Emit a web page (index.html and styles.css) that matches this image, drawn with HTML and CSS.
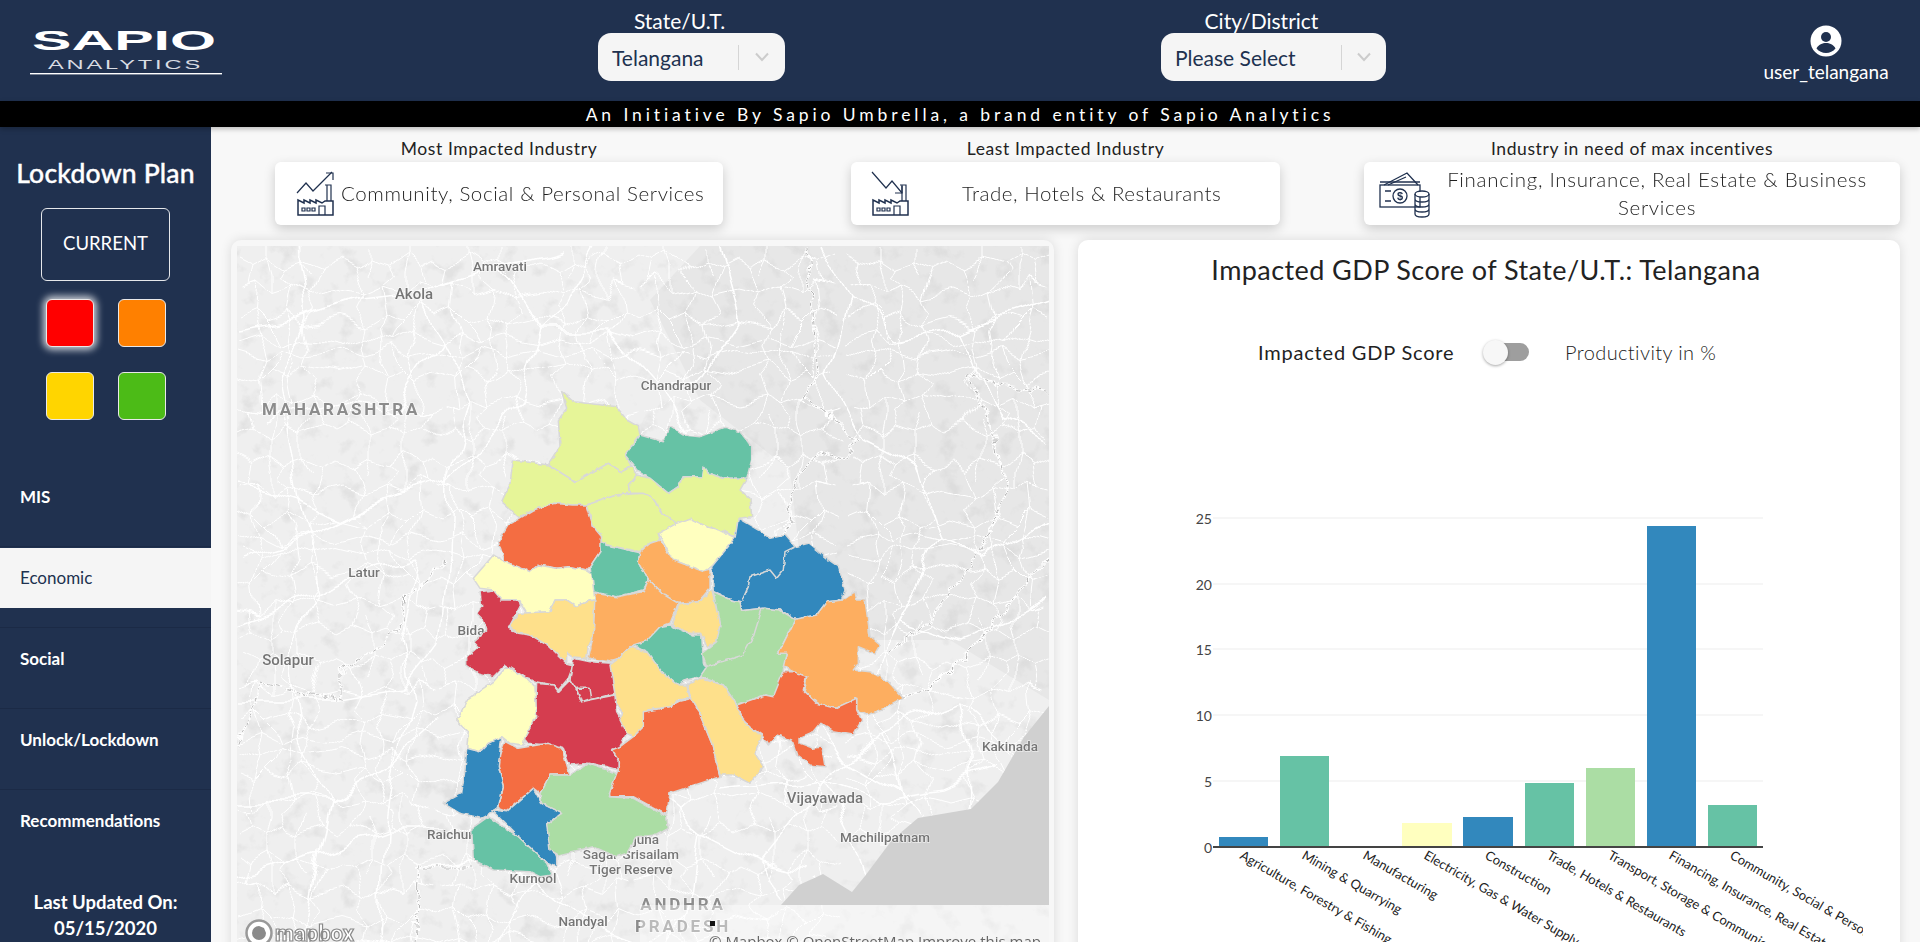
FILE: index.html
```html
<!DOCTYPE html>
<html lang="en">
<head>
<meta charset="utf-8">
<title>Sapio Analytics</title>
<link rel="stylesheet" href="styles.css">
</head>
<body>
<header class="topbar">
  <svg class="logo" width="200" height="50" viewBox="0 0 200 50">
    <text x="2" y="22" class="logo-main" textLength="184" lengthAdjust="spacingAndGlyphs">SAPIO</text>
    <text x="18" y="41" class="logo-sub" textLength="155" lengthAdjust="spacingAndGlyphs">ANALYTICS</text>
    <rect x="0" y="45" width="192" height="1.4" fill="#fff"/>
  </svg>
  <div class="field field-state">
    <div class="field-label">State/U.T.</div>
    <div class="select select-state"><span class="select-value">Telangana</span>
      <span class="select-sep"></span>
      <svg class="chev" width="16" height="10" viewBox="0 0 16 10"><path d="M2 1.500 8 8l6-6.500" fill="none" stroke="#ccc" stroke-width="2"/></svg>
    </div>
  </div>
  <div class="field field-city">
    <div class="field-label">City/District</div>
    <div class="select select-city"><span class="select-value">Please Select</span>
      <span class="select-sep"></span>
      <svg class="chev" width="16" height="10" viewBox="0 0 16 10"><path d="M2 1.500 8 8l6-6.500" fill="none" stroke="#ccc" stroke-width="2"/></svg>
    </div>
  </div>
  <div class="user">
    <svg width="32" height="32" viewBox="0 0 32 32"><circle cx="16" cy="16" r="15.500" fill="#fff"/><circle cx="16" cy="12" r="5" fill="#20314f"/><path d="M6.500 23.500c2-4 6-5.500 9.500-5.500s7.500 1.500 9.500 5.500c-2.400 2.900-5.700 4.500-9.500 4.500s-7.100-1.600-9.500-4.500z" fill="#20314f"/></svg>
    <div class="user-name">user_telangana</div>
  </div>
</header>
<div class="strip">An Initiative By Sapio Umbrella, a brand entity of Sapio Analytics</div>
<div class="shell">
  <aside class="sidebar">
    <div class="side-title">Lockdown Plan</div>
    <div class="current">CURRENT</div>
    <div class="swatches">
      <span class="swatch swatch-red"></span>
      <span class="swatch swatch-orange"></span>
      <span class="swatch swatch-yellow"></span>
      <span class="swatch swatch-green"></span>
    </div>
    <nav class="nav">
      <div class="nav-item">MIS</div>
      <div class="nav-item nav-active"><span class="nav-pill">Economic</span></div>
      <div class="nav-item">Social</div>
      <div class="nav-item">Unlock/Lockdown</div>
      <div class="nav-item nav-last">Recommendations</div>
    </nav>
    <div class="updated">Last Updated On:<br>05/15/2020</div>
  </aside>
  <main class="content">
    <section class="kpis">
      <div class="kpi kpi-1">
        <div class="kpi-label">Most Impacted Industry</div>
        <div class="kpi-card">
          <svg class="kpi-icon" width="40" height="46" viewBox="0 0 40 46" fill="none" stroke="#20314f" stroke-width="1.200">
            <path d="M1 22 10 12l7 8L36 1"/><path d="M30 2h7v7"/><path d="M29 14h6v16M31 14v16"/>
            <path d="M2 44V29l6 3v-3l6 3v-3l6 3v-3l6 3 3-2h8v14z" stroke-width="1.500"/>
            <path d="M6 37h3v3H6zM11 37h3v3h-3zM16 37h3v3h-3zM23 44v-9h6v9"/>
          </svg>
          <span class="kpi-text kpi-text-1">Community, Social &amp; Personal Services</span>
        </div>
      </div>
      <div class="kpi kpi-2">
        <div class="kpi-label">Least Impacted Industry</div>
        <div class="kpi-card">
          <svg class="kpi-icon" width="40" height="46" viewBox="0 0 40 46" fill="none" stroke="#20314f" stroke-width="1.200">
            <path d="M1 1 15 17l6-7 10 12"/><path d="M24 22h7v-7"/><path d="M29 14h6v16M31 14v16"/>
            <path d="M2 44V29l6 3v-3l6 3v-3l6 3v-3l6 3 3-2h8v14z" stroke-width="1.500"/>
            <path d="M6 37h3v3H6zM11 37h3v3h-3zM16 37h3v3h-3zM23 44v-9h6v9"/>
          </svg>
          <span class="kpi-text kpi-text-2">Trade, Hotels &amp; Restaurants</span>
        </div>
      </div>
      <div class="kpi kpi-3">
        <div class="kpi-label">Industry in need of max incentives</div>
        <div class="kpi-card">
          <svg class="kpi-icon" width="52" height="48" viewBox="0 0 52 48" fill="none" stroke="#20314f" stroke-width="1.300">
            <path d="M5 15 28 3l11 12M9 15 27 7"/>
            <rect x="1" y="15" width="40" height="22"/><path d="M1 12h40"/>
            <circle cx="21" cy="26" r="7"/><text x="21" y="30" class="icon-dollar">$</text>
            <path d="M6 21h6M6 31h6"/>
            <ellipse cx="43" cy="24" rx="7" ry="3" fill="#fff"/><path d="M36 24v20c0 4 14 4 14 0V24M36 29c0 4 14 4 14 0M36 34c0 4 14 4 14 0M36 39c0 4 14 4 14 0"/>
          </svg>
          <span class="kpi-text kpi-text-3">Financing, Insurance, Real Estate &amp; Business Services</span>
        </div>
      </div>
    </section>
    <section class="panels">
      <div class="panel panel-map">
        <svg class="map" width="812" height="696" viewBox="237 246 812 696">
          <defs>
            <filter id="terrain" x="0" y="0" width="100%" height="100%">
              <feTurbulence type="fractalNoise" baseFrequency="0.05" numOctaves="4" seed="7"/>
              <feColorMatrix type="matrix" values="0 0 0 0 0.55  0 0 0 0 0.55  0 0 0 0 0.55  4 0 0 0 -2.200"/>
            </filter>
            <filter id="wiggle" filterUnits="userSpaceOnUse" x="200" y="200" width="900" height="760">
              <feTurbulence type="fractalNoise" baseFrequency="0.028" numOctaves="1" seed="3" result="n"/>
              <feDisplacementMap in="SourceGraphic" in2="n" scale="30" xChannelSelector="R" yChannelSelector="G"/>
            </filter>
            <filter id="wiggle2" filterUnits="userSpaceOnUse" x="200" y="200" width="900" height="760">
              <feTurbulence type="fractalNoise" baseFrequency="0.07" numOctaves="2" seed="5" result="n"/>
              <feDisplacementMap in="SourceGraphic" in2="n" scale="14" xChannelSelector="R" yChannelSelector="G"/>
            </filter>
            <filter id="edge" x="-5%" y="-5%" width="110%" height="110%">
              <feTurbulence type="fractalNoise" baseFrequency="0.05" numOctaves="2" seed="9" result="n"/>
              <feDisplacementMap in="SourceGraphic" in2="n" scale="12" xChannelSelector="R" yChannelSelector="G"/>
            </filter>
            <g id="mesh" fill="none" stroke="#fff">
              <path vector-effect="non-scaling-stroke" d="M0 20 30 35 62 18 95 40 130 28 170 45 200 30"/>
              <path vector-effect="non-scaling-stroke" d="M5 80 40 70 70 95 110 82 150 100 200 88"/>
              <path vector-effect="non-scaling-stroke" d="M0 140 35 125 60 150 100 135 140 160 200 145"/>
              <path vector-effect="non-scaling-stroke" d="M0 190 50 175 90 195 140 180 200 195"/>
              <path vector-effect="non-scaling-stroke" d="M30 35 22 75 40 70 35 125 50 175 45 200"/>
              <path vector-effect="non-scaling-stroke" d="M95 40 85 60 110 82 100 135 115 165 110 200"/>
              <path vector-effect="non-scaling-stroke" d="M62 0 62 18 70 50 70 95"/>
              <path vector-effect="non-scaling-stroke" d="M170 45 160 70 150 100 165 130 140 160 150 200"/>
              <path vector-effect="non-scaling-stroke" d="M130 0 130 28 145 60"/>
              <path vector-effect="non-scaling-stroke" d="M60 150 80 170 90 195"/>
            </g>
            <g id="tile">
              <use href="#mesh" transform="scale(.5)"/>
              <use href="#mesh" transform="translate(200 0) scale(-.5 .5)"/>
              <use href="#mesh" transform="translate(0 200) scale(.5 -.5)"/>
              <use href="#mesh" transform="translate(200 200) scale(-.5 -.5)"/>
            </g>
            <clipPath id="mapclip"><rect x="237" y="246" width="812" height="696"/></clipPath>
          </defs>
          <rect x="237" y="246" width="812" height="696" fill="#efefef"/>
          <path d="M700 246H1049V700L950 640 860 640 800 560 790 470 700 400 650 300Z" fill="#e7e7e7"/>
          <rect x="237" y="246" width="812" height="696" filter="url(#terrain)" opacity=".28"/>
          <g clip-path="url(#mapclip)">
            <g filter="url(#wiggle)">
              <use href="#tile" transform="translate(237 246)"/>
              <use href="#tile" transform="translate(437 246)"/>
              <use href="#tile" transform="translate(637 246)"/>
              <use href="#tile" transform="translate(849 246)"/>
              <use href="#tile" transform="translate(237 446)"/>
              <use href="#tile" transform="translate(437 446)"/>
              <use href="#tile" transform="translate(637 446)"/>
              <use href="#tile" transform="translate(849 446)"/>
              <use href="#tile" transform="translate(237 646)"/>
              <use href="#tile" transform="translate(437 646)"/>
              <use href="#tile" transform="translate(637 646)"/>
              <use href="#tile" transform="translate(849 646)"/>
              <use href="#tile" transform="translate(237 846)"/>
              <use href="#tile" transform="translate(437 846)"/>
              <use href="#tile" transform="translate(637 846)"/>
              <g fill="none" stroke="#fff" stroke-width="1.500" stroke-linejoin="round">
                <path d="M237 330 300 320 360 300 414 294 470 275 500 266 560 250"/>
                <path d="M414 294 440 340 470 400 450 480 448 560 440 640"/>
                <path d="M500 266 542 330 565 310 600 246"/>
                <path d="M542 330 610 330 660 385 700 470"/>
                <path d="M542 330 520 400 450 480 380 500 300 540 237 560"/>
                <path d="M420 560 400 640 410 700 395 760 385 830 380 942"/>
                <path d="M237 480 300 500 340 520 380 500"/>
                <path d="M260 420 330 400 395 410 440 340"/>
                <path d="M300 246 310 320 280 380 300 500 320 590 288 660 300 740 330 800 300 942"/>
                <path d="M237 620 320 590 364 572 420 560"/>
                <path d="M237 700 340 700 400 690 440 640"/>
                <path d="M237 800 330 800 395 760 440 720"/>
                <path d="M237 880 300 860 385 830 440 830"/>
                <path d="M820 246 850 300 900 340 960 330 1049 300"/>
                <path d="M850 300 830 380 860 440 920 470 940 540 900 620 870 680"/>
                <path d="M960 330 1000 420 1049 440"/>
                <path d="M1049 520 980 560 940 540"/>
                <path d="M900 620 960 640 1049 600"/>
                <path d="M720 246 740 320 700 380 660 385"/>
                <path d="M760 860 825 780 885 730 960 700 1010 746 1049 740"/>
                <path d="M720 790 825 780 880 800 940 790 990 770"/>
                <path d="M825 780 850 830 865 876"/>
                <path d="M700 830 760 860 810 870"/>
                <path d="M640 780 700 830 690 905 660 942"/>
                <path d="M885 730 900 790 918 818"/>
                <path d="M960 700 970 760 971 809"/>
                <path d="M820 720 850 760 900 790"/>
                <path d="M420 867 470 860 533 880 583 921 640 942"/>
                <path d="M533 880 500 942"/>
                <path d="M780 905 760 860"/>
              </g>
            </g>
            <path d="M1049 706 1024 737 998 782 971 809 918 818 892 840 865 876 852 892 823 874 799 885 781 905H1049Z" fill="#d0d0d0"/>
            <g filter="url(#wiggle2)">
              <g fill="none" stroke="#fff" stroke-width="2.500">
                <path id="b1" d="M807 249 812 300 818 374 802 400 827 413 857 440 847 460 820 452 803 470 788 500 793 520 770 548"/>
                <path id="b2" d="M966 374 990 420 1008 495 975 560 918 634 886 652"/>
                <path id="b3" d="M447 562 405 598 399 634 341 670 341 701 262 683 238 746"/>
                <path id="b4" d="M415 942 420 867 473 867"/>
                <path id="b5" d="M1049 392 1000 385 966 374"/>
                <path id="b6" d="M1049 558 1020 590 980 640 930 690 886 700"/>
              </g>
              <g fill="none" stroke="#b5b5b5" stroke-width="1" stroke-dasharray="4 2 1 2">
                <use href="#b1"/><use href="#b2"/><use href="#b3"/><use href="#b4"/><use href="#b5"/><use href="#b6"/>
              </g>
            </g>
          </g>
          <g class="place">
            <text x="500" y="271">Amravati</text>
            <text x="414" y="299" class="place-lg">Akola</text>
            <text x="676" y="390">Chandrapur</text>
            <text x="364" y="577">Latur</text>
            <text x="288" y="665" class="place-lg">Solapur</text>
            <text x="471" y="635">Bida</text>
            <text x="450" y="839">Raichur</text>
            <text x="533" y="883">Kurnool</text>
            <text x="583" y="926">Nandyal</text>
            <text x="825" y="803" class="place-lg">Vijayawada</text>
            <text x="885" y="842">Machilipatnam</text>
            <text x="1010" y="751">Kakinada</text>
            <text x="628" y="844">Nagarjuna</text>
            <text x="631" y="859">Sagar-Srisailam</text>
            <text x="631" y="874">Tiger Reserve</text>
            <text x="341" y="415" class="place-state">MAHARASHTRA</text>
            <text x="683" y="910" class="place-state">ANDHRA</text>
            <text x="683" y="932" class="place-state">PRADESH</text>
          </g>
          <rect x="640" y="905" width="409" height="37" fill="#fff" opacity=".4"/>
          <g filter="url(#edge)" transform="translate(430 370) scale(.33333)" stroke="#d8d8d8" stroke-width="4.500" stroke-linejoin="round">
            <path fill="#e6f598" d="M395 65 430 95 560 110 590 150 625 170 630 195 585 255 605 290 575 305 535 280 435 335 355 285 390 230 385 150 410 115Z"/>
            <path fill="#66c2a5" d="M630 195 700 215 720 170 760 195 810 200 850 185 885 172 930 185 965 230 965 270 950 325 880 325 835 310 820 290 815 320 760 320 745 350 715 370 660 325 625 305 585 255Z"/>
            <path fill="#e6f598" d="M250 270 355 285 435 335 535 280 575 305 605 290 620 315 595 345 600 370 560 375 470 405 430 405 370 400 310 420 270 445 215 395 240 340Z"/>
            <path fill="#e6f598" d="M470 405 560 375 640 370 665 380 700 430 740 460 685 490 690 510 660 520 630 545 530 525 510 510 490 470Z"/>
            <path fill="#e6f598" d="M620 315 660 325 715 370 745 350 760 320 815 320 820 290 835 310 880 325 950 325 930 360 960 385 965 440 925 445 915 500 870 480 830 470 780 445 740 460 700 430 665 380 640 370 600 370 595 345Z"/>
            <path fill="#f46d43" d="M205 515 235 465 310 420 370 400 430 405 470 405 490 470 515 500 510 545 480 590 470 600 420 590 380 595 325 585 300 605 225 575Z"/>
            <path fill="#ffffbf" d="M685 490 740 460 780 445 830 470 870 480 918 505 900 550 860 580 820 605 730 570 700 515Z"/>
            <path fill="#3288bd" d="M925 445 985 480 1020 505 1065 495 1095 530 1135 520 1190 565 1225 590 1245 660 1235 690 1190 695 1160 735 1095 748 1050 720 1000 715 935 722 930 695 905 690 850 665 845 590 915 505Z"/>
            <path fill="none" d="M1095 530 1065 545 1060 600 1040 625 1020 600 960 620 955 650 935 695"/>
            <path fill="#66c2a5" d="M510 510 530 525 630 548 625 575 655 630 640 660 560 680 490 665 480 590 510 545Z"/>
            <path fill="#fdae61" d="M630 545 660 520 690 510 730 570 820 605 840 600 840 655 805 695 745 700 695 670 655 630 625 575Z"/>
            <path fill="#ffffbf" d="M130 625 160 590 190 555 225 575 300 605 325 585 380 595 420 590 470 600 485 610 495 690 470 695 440 710 410 690 375 690 360 725 290 730 265 690 215 690 190 660 150 655Z"/>
            <path fill="#d53e4f" d="M150 665 190 660 215 690 265 690 270 710 235 775 260 785 300 795 360 830 410 880 430 885 415 925 385 960 370 945 320 935 290 925 225 885 190 920 145 910 110 885 110 860 145 830 130 815 170 780 160 750 140 730 155 710Z"/>
            <path fill="#d53e4f" d="M430 865 480 875 545 880 555 970 480 990 465 995 440 965 420 930Z"/>
            <path fill="#d53e4f" d="M320 940 370 945 385 965 420 930 440 960 455 995 480 990 555 975 560 1025 575 1050 590 1090 570 1130 545 1140 565 1170 565 1200 530 1190 480 1180 420 1185 400 1135 355 1125 290 1120 280 1100 315 1050Z"/>
            <path fill="#d53e4f" d="M440 955 480 955 485 985 455 995Z"/>
            <path fill="#fee08b" d="M240 770 265 730 360 725 375 690 410 690 440 710 470 695 495 690 490 800 475 830 470 865 425 860 410 850 410 880 360 830 300 795 265 790Z"/>
            <path fill="#fdae61" d="M495 670 560 680 640 665 655 630 695 670 745 700 720 760 690 770 650 825 600 830 560 870 540 875 475 865 490 800Z"/>
            <path fill="#fee08b" d="M745 705 805 695 845 660 865 740 870 770 860 815 830 830 815 790 780 790 725 765Z"/>
            <path fill="#abdda4" d="M850 665 905 690 930 695 935 722 1000 715 1050 720 1095 748 1085 770 1045 850 1070 850 1060 900 1060 950 1030 980 1005 975 920 1005 880 945 810 920 830 890 815 850 860 815 870 770Z"/>
            <path fill="none" d="M995 720 970 800 940 855 860 880 825 890"/>
            <path fill="#66c2a5" d="M610 825 650 812 690 770 720 765 785 795 815 795 820 880 830 890 810 920 770 930 745 945 695 905 650 845Z"/>
            <path fill="#fdae61" d="M1095 748 1160 735 1190 695 1240 690 1275 665 1280 690 1305 690 1320 800 1350 825 1335 850 1285 830 1285 880 1270 900 1320 905 1375 935 1420 985 1365 1015 1310 1035 1280 1020 1280 985 1215 1015 1160 1000 1125 960 1130 920 1090 905 1060 890 1070 850 1045 850 1085 770Z"/>
            <path fill="#f46d43" d="M920 1005 1005 975 1030 980 1060 905 1090 905 1130 920 1120 960 1160 1000 1215 1015 1280 985 1280 1020 1295 1050 1270 1095 1210 1085 1170 1060 1145 1090 1110 1105 1110 1120 1150 1135 1175 1130 1185 1190 1140 1185 1100 1155 1085 1110 1040 1095 1015 1125 995 1095 945 1060Z"/>
            <path fill="#fee08b" d="M540 885 560 870 600 830 650 845 695 905 745 945 770 945 780 985 745 990 720 1010 650 1020 640 1070 610 1100 590 1090 570 1050 575 1025 560 1000Z"/>
            <path fill="#f46d43" d="M570 1130 610 1100 640 1070 640 1025 720 1010 745 995 785 985 800 1010 845 1120 870 1220 720 1270 710 1335 610 1280 540 1280 535 1250 565 1200 565 1170 545 1140Z"/>
            <path fill="#fee08b" d="M770 945 810 925 880 945 920 1005 945 1060 995 1100 975 1150 1000 1190 960 1240 910 1215 870 1215 845 1120 800 1010 785 985Z"/>
            <path fill="#ffffbf" d="M80 1050 115 985 190 935 230 890 290 925 315 950 320 1040 285 1100 280 1125 240 1120 215 1100 175 1120 150 1145 110 1135 115 1085Z"/>
            <path fill="#f46d43" d="M225 1115 265 1135 355 1120 395 1135 420 1215 360 1215 330 1270 310 1255 230 1325 205 1315 220 1250 205 1190 195 1185Z"/>
            <path fill="#3288bd" d="M110 1135 150 1145 175 1120 215 1100 205 1190 220 1250 205 1310 175 1335 155 1345 90 1330 40 1300 95 1270 105 1200Z"/>
            <path fill="#3288bd" d="M185 1320 230 1325 310 1255 335 1300 395 1330 385 1355 350 1360 360 1410 380 1460 380 1490 350 1480 265 1400Z"/>
            <path fill="#abdda4" d="M330 1270 360 1215 420 1215 470 1180 560 1210 535 1280 610 1285 710 1340 715 1375 680 1395 620 1400 590 1450 560 1460 490 1430 385 1455 360 1440 350 1365 395 1330 335 1300Z"/>
            <path fill="#66c2a5" d="M175 1340 265 1400 350 1480 365 1515 330 1520 300 1505 190 1500 130 1470 125 1375Z"/>
          </g>
          <rect x="710" y="921" width="5" height="5" fill="#111"/>
          <g class="mapbox">
            <circle cx="259" cy="933" r="12.500" fill="#fff" stroke="#999" stroke-width="2.500"/>
            <path d="M259 926a7 7 0 1 0 7 7l-2-5-5-2z" fill="#8a8a8a"/>
            <text x="275" y="941" class="mapbox-word">mapbox</text>
            <text x="709" y="947" class="attrib">© Mapbox © OpenStreetMap Improve this map</text>
          </g>
        </svg>
      </div>
      <div class="panel panel-chart">
        <h2 class="chart-title">Impacted GDP Score of State/U.T.: Telangana</h2>
        <div class="toggle-row">
          <span class="toggle-on">Impacted GDP Score</span>
          <span class="toggle"><span class="knob"></span></span>
          <span class="toggle-off">Productivity in %</span>
        </div>
        <svg class="chart" width="710" height="452" viewBox="1190 490 710 452">
          <defs><clipPath id="ticks"><rect x="1190" y="850" width="673" height="92"/></clipPath></defs>
          <g stroke="#eeeeee" stroke-width="1.200">
            <path d="M1213 518H1763M1213 584H1763M1213 649H1763M1213 715H1763M1213 781H1763"/>
          </g>
          <g class="ytick">
            <text x="1212" y="524">25</text><text x="1212" y="590">20</text><text x="1212" y="655">15</text>
            <text x="1212" y="721">10</text><text x="1212" y="787">5</text><text x="1212" y="853">0</text>
          </g>
          <g>
            <rect x="1219" y="837" width="49" height="10" fill="#3288bd"/>
            <rect x="1280" y="756" width="49" height="91" fill="#66c2a5"/>
            <rect x="1402" y="823" width="50" height="24" fill="#ffffbf"/>
            <rect x="1463" y="817" width="50" height="30" fill="#3288bd"/>
            <rect x="1525" y="783" width="49" height="64" fill="#66c2a5"/>
            <rect x="1586" y="768" width="49" height="79" fill="#abdda4"/>
            <rect x="1647" y="526" width="49" height="321" fill="#3288bd"/>
            <rect x="1708" y="805" width="49" height="42" fill="#66c2a5"/>
          </g>
          <rect x="1213" y="846" width="550" height="2" fill="#444"/>
          <g class="xtick" clip-path="url(#ticks)">
            <text transform="translate(1239 858) rotate(30)">Agriculture, Forestry &amp; Fishing</text>
            <text transform="translate(1301 858) rotate(30)">Mining &amp; Quarrying</text>
            <text transform="translate(1362 858) rotate(30)">Manufacturing</text>
            <text transform="translate(1423 858) rotate(30)">Electricity, Gas &amp; Water Supply</text>
            <text transform="translate(1484 858) rotate(30)">Construction</text>
            <text transform="translate(1546 858) rotate(30)">Trade, Hotels &amp; Restaurants</text>
            <text transform="translate(1607 858) rotate(30)">Transport, Storage &amp; Communication</text>
            <text transform="translate(1668 858) rotate(30)">Financing, Insurance, Real Estate &amp; Business Services</text>
            <text transform="translate(1729 858) rotate(30)">Community, Social &amp; Personal Services</text>
          </g>
        </svg>
      </div>
    </section>
  </main>
</div>
</body>
</html>
```
FILE: styles.css
```css
* { box-sizing: border-box; }
html, body { margin: 0; height: 942px; overflow: hidden; }
body { font-family: Lato, "Open Sans", sans-serif; background: #f8f8f8; color: #222; }

.topbar { height: 101px; background: #20314f; color: #fff; display: flex; align-items: flex-start; position: relative; padding-left: 30px; }
.logo { margin-top: 28px; flex: none; }
.logo-main { font: 700 28px "Liberation Sans", sans-serif; fill: #fff; }
.logo-sub { font: 400 12.500px "Liberation Sans", sans-serif; fill: #d8dce3; letter-spacing: 1.500px; }
.field { flex: none; padding-top: 9px; }
.field-state { margin-left: 368px; width: 187px; }
.field-city { margin-left: 376px; width: 225px; }
.field-label { font-size: 21px; line-height: 24px; height: 24px; text-align: center; padding-right: 24px; }
.select { height: 48px; border-radius: 13px; background: #f5f5f5; display: flex; align-items: center; color: #20314f; font-size: 21px; padding-left: 14px; position: relative; }
.select-value { flex: 1; }
.select-sep { width: 1px; height: 25px; background: #d5d5d5; }
.chev { margin: 0 14px; }
.select-state .chev { margin: 0 15px; }
.user { flex: none; margin-left: 375px; width: 130px; text-align: center; padding-top: 25px; }
.user svg { display: block; margin: 0 auto; }
.user-name { font-size: 19px; line-height: 24px; margin-top: 3px; white-space: nowrap; }

.strip { height: 26px; background: #000; color: #fff; text-align: center; font-size: 17.500px; line-height: 27px; letter-spacing: 3.900px; box-shadow: 0 2px 5px rgba(0,0,0,.25); position: relative; }

.shell { display: flex; height: 815px; }
.sidebar { width: 211px; flex: none; background: #20314f; color: #fff; padding-top: 30px; }
.side-title { font-size: 26.500px; line-height: 32px; font-weight: 500; text-align: center; letter-spacing: .2px; -webkit-text-stroke: .35px #fff; }
.current { width: 129px; height: 73px; margin: 19px 0 0 41px; padding-bottom: 3px; border: 1px solid #e5e7ea; border-radius: 6px; display: flex; align-items: center; justify-content: center; font-size: 18.500px; }
.swatches { display: grid; grid-template-columns: 48px 48px; gap: 25px 24px; margin: 18px 0 0 46px; }
.swatch { height: 48px; border: 1px solid #e9e9e9; border-radius: 6px; }
.swatch-red { background: #f00; box-shadow: 0 0 7px 3px rgba(255,255,255,.75); }
.swatch-orange { background: #ff8000; }
.swatch-yellow { background: #ffd500; }
.swatch-green { background: #4cbb17; }
.nav { margin-top: 46px; }
.nav-item { height: 81px; padding: 20px 0 0 20px; font-size: 17px; font-weight: 700; line-height: 22px; border-bottom: 1px solid #1b2a46; }
.nav-last { border-bottom: 0; }
.nav-active { padding: 1px 0 0; }
.nav-pill { display: flex; align-items: center; height: 60px; padding-left: 20px; background: #f5f5f5; color: #20314f; font-weight: 400; }
.updated { margin-top: 18px; text-align: center; font-size: 18.500px; line-height: 26px; font-weight: 700; }

.content { flex: 1; min-width: 0; }
.kpis { display: flex; padding-left: 64px; height: 113px; }
.kpi { flex: none; }
.kpi-1 { width: 448px; }
.kpi-2 { width: 429px; margin-left: 128px; }
.kpi-3 { width: 536px; margin-left: 84px; }
.kpi-label { font-size: 17.500px; line-height: 22px; height: 35px; padding-top: 11px; text-align: center; color: #222; letter-spacing: .6px; }
.kpi-card { height: 63px; background: #fff; border-radius: 6px; box-shadow: 0 4px 12px rgba(0,0,0,.18); display: flex; align-items: center; position: relative; }
.kpi-icon { flex: none; }
.kpi-1 .kpi-icon { margin-left: 21px; }
.kpi-2 .kpi-icon { margin-left: 20px; }
.kpi-3 .kpi-icon { margin-left: 15px; }
.icon-dollar { font: 700 11px "Liberation Sans", sans-serif; text-anchor: middle; fill: #20314f; stroke: none; }
.kpi-text { font-size: 20.500px; line-height: 28px; color: #1f1f1f; font-weight: 300; text-align: center; padding-bottom: 2px; }
.kpi-text-1 { margin-left: 5px; letter-spacing: .6px; white-space: nowrap; }
.kpi-text-2 { margin-left: 51px; letter-spacing: .55px; white-space: nowrap; }
.kpi-text-3 { width: 440px; margin-left: 6px; letter-spacing: .7px; }

.panels { display: flex; padding-left: 20px; gap: 24px; }
.panel { height: 720px; flex: none; box-shadow: 0 0 12px rgba(0,0,0,.12); border-radius: 10px; }
.panel-map { width: 823px; background: #f7f7f7; padding: 6px 5px 0 6px; overflow: hidden; }
.map { display: block; }
.place text { font: 500 13.500px Roboto, sans-serif; fill: #757575; text-anchor: middle; paint-order: stroke; stroke: #fff; stroke-width: 1.500px; stroke-opacity: .6; }
.place .place-lg { font-size: 15px; }
.place .place-state { font-weight: 700; font-size: 17px; letter-spacing: 2.800px; fill: #8c8c8c; }
.mapbox-word { font: 700 22px Roboto, sans-serif; fill: #fff; stroke: #8a8a8a; stroke-width: 1.200px; }
.attrib { font: 400 15px "Open Sans", sans-serif; fill: #666; }

.panel-chart { width: 822px; background: #fff; padding-top: 14px; }
.chart-title { margin: 0; font-size: 27px; line-height: 32px; font-weight: 400; text-align: center; color: #222; letter-spacing: .42px; padding-right: 6px; }
.toggle-row { height: 30px; margin: 51px 0 0 180px; display: flex; align-items: center; font-size: 20px; }
.toggle-on { width: 230px; color: #222; letter-spacing: .8px; }
.toggle { width: 41px; height: 18px; border-radius: 9px; background: #9e9e9e; position: relative; }
.knob { position: absolute; left: -5px; top: -3px; width: 25px; height: 25px; border-radius: 50%; background: #f7f7f7; box-shadow: 0 1px 3px rgba(0,0,0,.35); }
.toggle-off { margin-left: 36px; color: #222; font-weight: 300; letter-spacing: .4px; }
.chart { display: block; margin: 123px 0 0 112px; }
.ytick text { font-size: 14px; fill: #444; text-anchor: end; }
.xtick text { font-size: 13px; fill: #222; }
```
